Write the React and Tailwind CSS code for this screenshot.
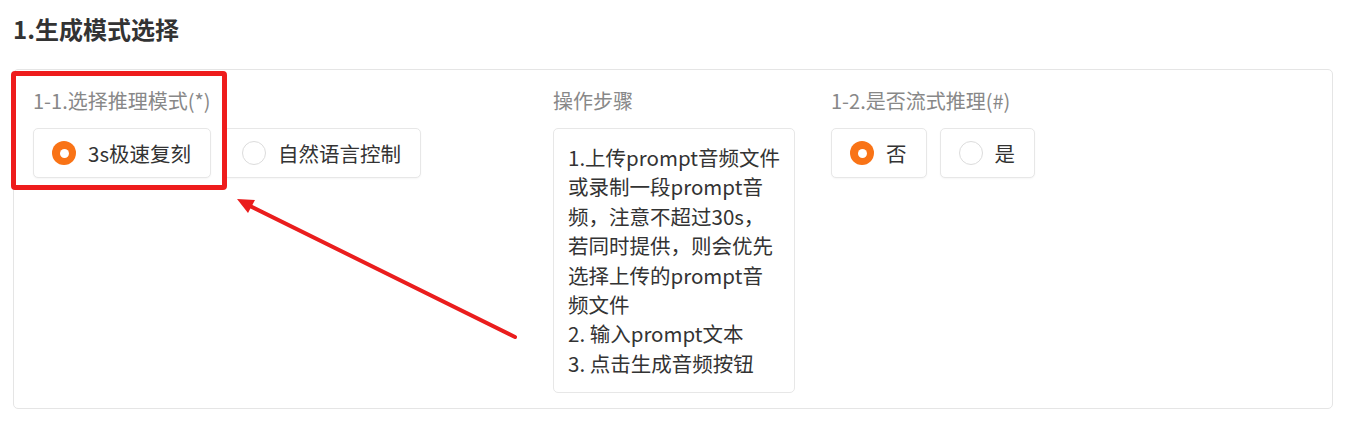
import React, { useState } from "react";

const font = { fontFamily: '"Noto Sans CJK SC", "Noto Sans", sans-serif' };

function Radio({ label, checked, onClick }) {
  return (
    <label
      onClick={onClick}
      className="flex h-[50px] cursor-pointer items-center gap-[12px] rounded-[5px] border border-[#e7e7e7] bg-white pl-[18px] pr-[19px] shadow-[0_1px_2px_rgba(0,0,0,0.04)]"
    >
      {checked ? (
        <span className="flex h-[24px] w-[24px] items-center justify-center rounded-full bg-[#f97316]">
          <span className="h-[9px] w-[9px] rounded-full bg-white" />
        </span>
      ) : (
        <span className="h-[24px] w-[24px] rounded-full border border-[#dcdcdc] bg-white" />
      )}
      <span className="text-[20.5px] leading-[29px] text-[#333]">{label}</span>
    </label>
  );
}

const steps = [
  "1.上传prompt音频文件",
  "或录制一段prompt音",
  "频，注意不超过30s，",
  "若同时提供，则会优先",
  "选择上传的prompt音",
  "频文件",
  "2. 输入prompt文本",
  "3. 点击生成音频按钮",
];

export default function App() {
  const [mode, setMode] = useState("3s极速复刻");
  const [stream, setStream] = useState("否");

  return (
    <div className="relative h-[426px] w-[1347px] overflow-hidden bg-white pl-[13px] pt-[13px]" style={font}>
      <h2 className="text-[24px] font-bold leading-[32px] text-[#333]">1.生成模式选择</h2>

      <div className="mt-[24px] flex w-[1320px] rounded-[5px] border border-[#e5e5e5] pb-[15px] pl-[19px] pt-[16px]">
        <div className="w-[520px]">
          <div className="text-[20px] leading-[29px] text-[#888]">1-1.选择推理模式(*)</div>
          <div className="mt-[13px] flex gap-[12px]">
            {["3s极速复刻", "自然语言控制"].map((m) => (
              <Radio key={m} label={m} checked={mode === m} onClick={() => setMode(m)} />
            ))}
          </div>
        </div>

        <div className="w-[278px]">
          <div className="text-[20px] leading-[29px] text-[#888]">操作步骤</div>
          <div className="mt-[13px] w-[242px] rounded-[5px] border border-[#e7e7e7] px-[14px] py-[14px] text-[20.5px] leading-[29.4px] text-[#333]">
            {steps.map((s) => (
              <div key={s} className="whitespace-nowrap">{s}</div>
            ))}
          </div>
        </div>

        <div>
          <div className="text-[20px] leading-[29px] text-[#888]">1-2.是否流式推理(#)</div>
          <div className="mt-[13px] flex gap-[13px]">
            {["否", "是"].map((m) => (
              <Radio key={m} label={m} checked={stream === m} onClick={() => setStream(m)} />
            ))}
          </div>
        </div>
      </div>

      {/* annotation overlay */}
      <div className="pointer-events-none absolute left-[11px] top-[71px] h-[119px] w-[216px] rounded-[4px] border-[5px] border-[#ee1c1c]" />
      <svg className="pointer-events-none absolute left-0 top-0" width="1347" height="426">
        <line x1="515" y1="337" x2="244" y2="203" stroke="#ea1d1d" strokeWidth="4" strokeLinecap="round" />
        <path d="M237 199 L255 200 L248 213 Z" fill="#ea1d1d" />
      </svg>
    </div>
  );
}
